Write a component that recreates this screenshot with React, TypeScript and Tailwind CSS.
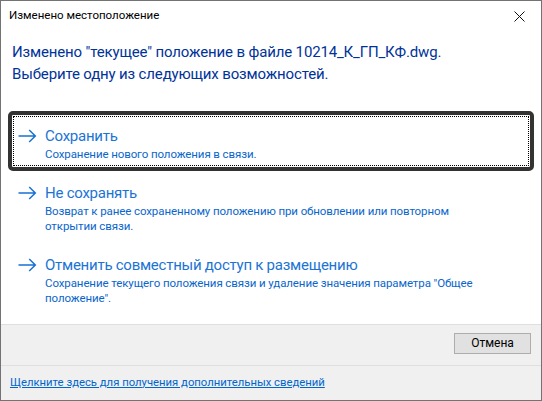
const FONT = "font-['Roboto',sans-serif]";

type CommandLinkProps = {
  title: string;
  description: string;
  focused?: boolean;
};

const Arrow = () => (
  <svg width="19" height="14" viewBox="0 0 19 14" className="shrink-0" aria-hidden>
    <path d="M0.5 7h17M11.2 1 17.3 7 11.2 13" fill="none" stroke="#1672d2" strokeWidth="1.5" />
  </svg>
);

const CommandLink = ({ title, description, focused }: CommandLinkProps) => (
  <div className="relative flex gap-[8px] pl-[17px] pr-[50px] pt-[14px] pb-[6px]">
    {focused ? (
      <div className="pointer-events-none absolute left-[7px] right-[7px] top-0 bottom-[-3px] rounded-[5px] border-[4px] border-[#333333] p-[1px]">
        <div className="h-full w-full border border-dotted border-black" />
      </div>
    ) : null}
    <div className="flex h-[22px] items-center">
      <Arrow />
    </div>
    <div className="min-w-0">
      <p className="text-[15px] leading-[22px] tracking-[-0.25px] text-[#1b74d4]">{title}</p>
      <p className="text-[11.5px] leading-[15px] tracking-[-0.1px] text-[#0a66cc]">{description}</p>
    </div>
  </div>
);

export default function App() {
  return (
    <div className={`flex h-[401px] w-[542px] flex-col border border-[#737373] bg-white text-black ${FONT}`}>
      <div className="flex h-[30px] shrink-0 items-center justify-between pl-[8px] pr-[16px]">
        <span className="text-[11.5px]">Изменено местоположение</span>
        <svg width="11" height="11" viewBox="0 0 11 11" aria-hidden>
          <path d="M0.5 0.5l10 10M10.5 0.5l-10 10" stroke="#111" strokeWidth="1" />
        </svg>
      </div>

      <div className="flex-1">
        <div className="pl-[11px] pt-[10px] text-[15px] leading-[22px] tracking-[-0.15px] text-[#003399]">
          <p>Изменено "текущее" положение в файле 10214_К_ГП_КФ.dwg.</p>
          <p>Выберите одну из следующих возможностей.</p>
        </div>

        <div className="mt-[26px] flex flex-col">
          <CommandLink focused title="Сохранить" description="Сохранение нового положения в связи." />
          <CommandLink
            title="Не сохранять"
            description="Возврат к ранее сохраненному положению при обновлении или повторном открытии связи."
          />
          <CommandLink
            title="Отменить совместный доступ к размещению"
            description={'Сохранение текущего положения связи и удаление значения параметра "Общее положение".'}
          />
        </div>
      </div>

      <div className="flex h-[41px] shrink-0 items-start justify-end border-t border-[#dfdfdf] bg-[#f0f0f0] pr-[10px] pt-[8px]">
        <button className="h-[21px] w-[77px] border border-[#adadad] bg-[#e1e1e1] text-[12px] leading-[19px]">
          Отмена
        </button>
      </div>
      <div className="flex h-[35px] shrink-0 items-center border-t border-[#dfdfdf] bg-[#f0f0f0] pl-[9px]">
        <a className="text-[11.3px] text-[#0066cc] underline">Щелкните здесь для получения дополнительных сведений</a>
      </div>
    </div>
  );
}
